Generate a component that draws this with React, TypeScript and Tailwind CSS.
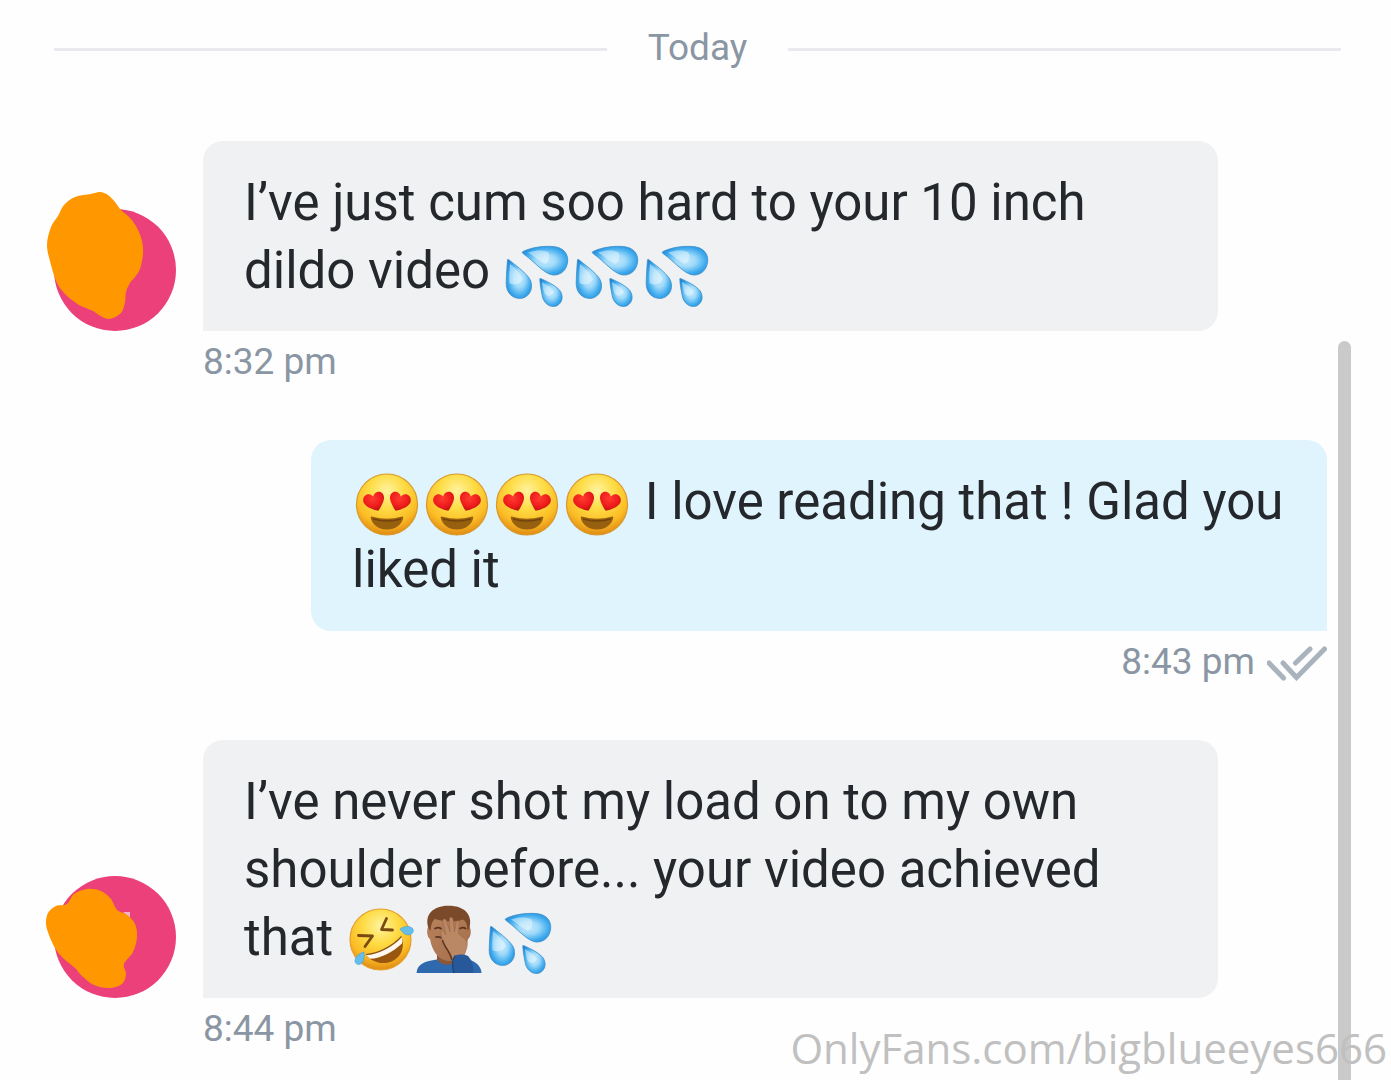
import type { ReactNode } from "react";

const EMOJI = "inline-block h-[68px] w-[70px] overflow-visible align-top";

type Point = [number, number];

/** Closed curve that passes smoothly through every point. */
function smoothPath(points: Point[]): string {
  const n = points.length;
  const at = (i: number) => points[(i + n) % n];
  let d = `M${points[0][0]} ${points[0][1]}`;
  for (let i = 0; i < n; i++) {
    const [a, b, c, e] = [at(i - 1), at(i), at(i + 1), at(i + 2)];
    d += `C${b[0] + (c[0] - a[0]) / 6} ${b[1] + (c[1] - a[1]) / 6} ${c[0] - (e[0] - b[0]) / 6} ${c[1] - (e[1] - b[1]) / 6} ${c[0]} ${c[1]}`;
  }
  return d + "Z";
}

function Gradients() {
  return (
    <svg className="absolute h-0 w-0" aria-hidden="true">
      <defs>
        <radialGradient id="face" cx="0.5" cy="0.28" r="0.72">
          <stop offset="0" stopColor="#fff3a0" />
          <stop offset="0.4" stopColor="#fedc45" />
          <stop offset="0.75" stopColor="#fbbc25" />
          <stop offset="1" stopColor="#e08a14" />
        </radialGradient>
        <radialGradient id="heart" cx="0.45" cy="0.35" r="0.7">
          <stop offset="0" stopColor="#ff3b30" />
          <stop offset="0.6" stopColor="#ef1c1c" />
          <stop offset="1" stopColor="#b80f12" />
        </radialGradient>
        <radialGradient id="drop" cx="0.52" cy="0.5" r="0.62">
          <stop offset="0" stopColor="#c5eafc" />
          <stop offset="0.35" stopColor="#a0dafa" />
          <stop offset="0.7" stopColor="#41acee" />
          <stop offset="1" stopColor="#1e84d6" />
        </radialGradient>
        <linearGradient id="skin" x1="0" y1="0" x2="1" y2="1">
          <stop offset="0" stopColor="#b9835c" />
          <stop offset="1" stopColor="#a36e4b" />
        </linearGradient>
      </defs>
    </svg>
  );
}

function Drops() {
  return (
    <svg viewBox="0 0 70 68" className={EMOJI} role="img" aria-label="sweat droplets">
      <g fill="url(#drop)" stroke="#3d8fc9" strokeWidth="0.8">
        <path d="M20 14.500C29 10 43 8.500 52 9.800C60 11 65 16 64.700 24C64 33 58 38.500 50 38C41 37 32 25 20 16.500C19 15.800 19 15 20 14.500Z" />
        <path d="M5.500 22.500C11 27 22 35 26.500 41.500C31 49 28 59 19 61.300C9 62.500 3 55 3.200 46C3.400 38 4 29 4.500 23C4.700 22.300 5 22.200 5.500 22.500Z" />
        <path d="M37.500 41.500C43 44 52 48 56.500 53C61 59 59.500 66 53.500 69C46.500 71 41 66 39.500 60C38 53 37 47 36.800 42C36.800 41.500 37 41.300 37.500 41.500Z" />
      </g>
      <g fill="#e8f8ff" opacity="0.5">
        <path d="M25 15.500C33 12.500 41 13 45 15C48 19 46 25 42 27C36 24 31 19 25 15.500Z" />
        <path d="M7 27C12 31 18 37 20 42C18 47 11 49 6.500 46C6 40 6.500 33 7 27Z" />
        <path d="M39 45C44 48 49 51 51 55C49 59 45 60 42 57C40 53 39.500 49 39 45Z" />
      </g>
    </svg>
  );
}

function HeartEyes() {
  return (
    <svg viewBox="0 1 70 68" className={EMOJI} role="img" aria-label="smiling face with heart eyes">
      <circle cx="35" cy="37.500" r="30.500" fill="url(#face)" stroke="#d99a2b" strokeWidth="1.200" />
      <path
        d="M26.300 43.800C20 42.500 12.500 39.500 11.300 34.500C10.500 30 14 26.500 18 27.500C19.500 28 20.500 28.800 21.300 29.800C21.500 26.500 25 24 28.500 25C32 26.500 32.800 30.500 31.300 34.500C30 38 28 41.500 26.300 43.800Z"
        fill="url(#heart)"
      />
      <path
        d="M43.700 43.800C50 42.500 57.500 39.500 58.700 34.500C59.500 30 56 26.500 52 27.500C50.500 28 49.500 28.800 48.700 29.800C48.500 26.500 45 24 41.500 25C38 26.500 37.200 30.500 38.700 34.500C40 38 42 41.500 43.700 43.800Z"
        fill="url(#heart)"
      />
      <path
        d="M18.700 50.500C18.700 49.600 19.500 49.400 20.500 49.700C30 52.300 40 52.300 49.500 49.700C50.500 49.400 51.300 49.600 51.300 50.500C50 58 43 62.500 35 62.500C27 62.500 20 58 18.700 50.500Z"
        fill="#96600f"
      />
      <path d="M21 52C30 54.500 40 54.500 49 52" fill="none" stroke="#74440c" strokeWidth="1.500" />
    </svg>
  );
}

function Rofl() {
  return (
    <svg viewBox="0 1 70 68" className={EMOJI} role="img" aria-label="rolling on the floor laughing">
      <circle cx="34.500" cy="36.500" r="30.500" fill="url(#face)" stroke="#e5a02c" strokeWidth="1.200" />
      <path
        d="M12.500 32.500L26.500 33L19 43.500M40.500 15.500L35.500 26.500L46.500 27"
        fill="none"
        stroke="#7a4a10"
        strokeWidth="2.800"
        strokeLinecap="round"
        strokeLinejoin="round"
      />
      <path
        d="M20 51.500C32 51 47 43 55.500 33.500C59 43 56 53 47.500 57.500C38 62.500 26 60 20 51.500Z"
        fill="#99560f"
      />
      <path d="M20 51.500C32 51 47 43 55.500 33.500C56.500 36.500 56.500 38.500 56 40.500C47 49 35 55.500 24 55.800C22.500 54.500 21 53 20 51.500Z" fill="#fff8ee" />
      <path d="M20 51.500C32 51 47 43 55.500 33.500" fill="none" stroke="#8a5213" strokeWidth="1.200" />
      <path
        d="M54 26C58 22.500 65 22.500 67 26C68.500 30 64 33 60 31.500C57.500 30.500 55.500 28.500 54 26Z"
        fill="#65bdea"
        stroke="#4aa0d0"
        strokeWidth="0.600"
      />
      <path
        d="M18 49C13 50 8.500 54.500 9 58.500C10 62.500 15 62.500 17 58.500C18.300 55.500 18.500 52 18 49Z"
        fill="#65bdea"
        stroke="#4aa0d0"
        strokeWidth="0.600"
      />
    </svg>
  );
}

function Facepalm() {
  return (
    <svg viewBox="1 1 70 68" className={EMOJI} role="img" aria-label="man facepalming">
      <path d="M1.500 70C2 61 10 58 22 56.500L46 54C58 57 66 61 66.500 70Z" fill="#2f69ad" />
      <path d="M22 50H40V60C34 63 26 62 22 57Z" fill="#8a5836" />
      <path
        d="M13.500 24C13 12 21 6 34 6C47 6 54.500 12 54 24C56.500 24.500 56.500 34 53 36C51 48 44 58 34 58C24 58 17 48 15 36C11.500 34 11.500 24.500 13.500 24Z"
        fill="url(#skin)"
      />
      <path
        d="M13.500 25C9 12 18 2.700 33 2.700C49 2.500 58 11 54.500 25L52.500 28C52.500 22 51 18 48 16.500C39 19.500 29 19 20 16C17 18 16 22 15.500 28Z"
        fill="#7b4a2a"
      />
      <path
        d="M20 25.500C22 24.300 24 24.300 26 25.500M45 25.500C47 24.300 49 24.300 50.500 25.500M21 34C23 33.500 25 34 27 35"
        fill="none"
        stroke="#5b3420"
        strokeWidth="1.800"
        strokeLinecap="round"
      />
      <path
        d="M26 31C25 27 27.500 26 29 29L31 32L27.800 19C27.300 15.500 30.500 15 31.500 18L35 29L34.500 16.500C34.500 13.500 37.500 13.500 38 16.500L39.500 29L41 20C41.500 17 44.500 17.500 44 20.500L43.500 31C47 34 51 36 52 39C53 44 50 48 49 54L38 57C36 50 29 43 27.500 38Z"
        fill="#bb8866"
        stroke="#9d6c4a"
        strokeWidth="0.700"
      />
      <path d="M27.500 37C29 44 35 48 37 57" fill="none" stroke="#5f361f" strokeWidth="1.500" />
      <path d="M38 70C36 63 37 56 40 52.500C44 51 49 51 53 53C57 57 59 64 58 70Z" fill="#27589a" />
      <path d="M40 52.500C37.500 57 37 64 39 70" fill="none" stroke="#1d4477" strokeWidth="1.200" />
    </svg>
  );
}

const BLOB_ONE: Point[] = [
  [37, -15], [46, -17], [54, -14], [61, -7], [67, 1], [76, 9], [83, 19], [88, 32], [89, 45], [86, 60],
  [81, 68], [76, 74], [72, 83], [71, 93], [67, 104], [55, 110], [45, 106], [39, 102], [25, 96], [12, 86],
  [3, 74], [-3, 56], [-7, 36], [-3, 18], [4, 7], [10, -4], [21, -12],
];
const BLOB_TWO: Point[] = [
  [13, 28], [20, 18], [33, 13], [47, 15], [57, 23], [63, 34], [73, 39], [81, 48], [83, 61], [79, 76],
  [70, 88], [72, 98], [68, 108], [55, 112], [40, 109], [28, 100], [21, 92], [9, 82], [1, 72], [-5, 59],
  [-8, 48], [-6, 37], [2, 30],
];

function Avatar({ blob, speck }: { blob: Point[]; speck?: boolean }) {
  return (
    <svg viewBox="0 0 122 122" className="size-[122px] shrink-0 overflow-visible" role="img" aria-label="Avatar">
      <circle cx="61" cy="61" r="61" fill="#ec407a" />
      {speck && <path d="M69 36h7v6z" fill="#f3b3c6" />}
      <path d={smoothPath(blob)} fill="#ff9800" />
    </svg>
  );
}

function Received({ time, avatar, children }: { time: string; avatar: ReactNode; children: ReactNode }) {
  return (
    <article className="mb-[53px] pr-[173px] pl-[54px]">
      <div className="flex items-end gap-[27px]">
        {avatar}
        <p className="min-w-0 flex-1 rounded-[20px] rounded-bl-none bg-[#f0f1f3] px-[41px] pt-[28px] pb-[26px]">
          {children}
        </p>
      </div>
      <time className="block pt-[5px] pl-[149px] text-[37px] leading-[51px] text-[#8a96a3]">{time}</time>
    </article>
  );
}

export default function App() {
  return (
    <main className="relative h-screen overflow-hidden bg-[#fefefe] font-[Roboto,sans-serif] text-[51px] leading-[68px] text-[#24272b]">
      <Gradients />
      <div className="flex items-center gap-[41px] pt-[22px] pr-[50px] pb-[68px] pl-[54px] text-[37px] leading-[51px] text-[#8a96a3]">
        <span className="mt-1 h-[3px] flex-1 bg-[#e8eaee]" />
        <h2>Today</h2>
        <span className="mt-1 h-[3px] flex-1 bg-[#e8eaee]" />
      </div>

      <Received time="8:32 pm" avatar={<Avatar blob={BLOB_ONE} />}>
        I’ve just cum soo hard to your 10 inch dildo video <Drops />
        <Drops />
        <Drops />
      </Received>

      <article className="mb-[53px] pr-[64px] pl-[311px]">
        <p className="rounded-[20px] rounded-br-none bg-[#e0f4fe] pt-[28px] pr-[36px] pb-[27px] pl-[41px]">
          <HeartEyes />
          <HeartEyes />
          <HeartEyes />
          <HeartEyes /> I love reading that ! Glad you liked it
        </p>
        <div className="flex items-center justify-end gap-3 pt-[5px] text-[37px] leading-[51px] text-[#8a96a3]">
          <time>8:43 pm</time>
          <svg viewBox="0 0 60 35" className="mt-1 h-[35px] w-[60px]" role="img" aria-label="Read">
            <path
              d="M2 17L16.500 32M16 17L29.500 31.500L57.500 3M28.500 17L43 3"
              fill="none"
              stroke="#a9b3bd"
              strokeWidth="5"
              strokeLinecap="round"
            />
          </svg>
        </div>
      </article>

      <Received time="8:44 pm" avatar={<Avatar blob={BLOB_TWO} speck />}>
        I’ve never shot my load on to my own shoulder before... your video achieved that <Rofl />
        <Facepalm />
        <Drops />
      </Received>

      <div className="absolute top-[341px] right-10 bottom-0 w-[13px] rounded-t-full bg-[#cacaca]" />
      <p className="absolute right-[4px] bottom-0 font-['Open_Sans',sans-serif] text-[42px] leading-[64px] text-[#c0c0c0]">
        OnlyFans.com/bigblueeyes666
      </p>
    </main>
  );
}
